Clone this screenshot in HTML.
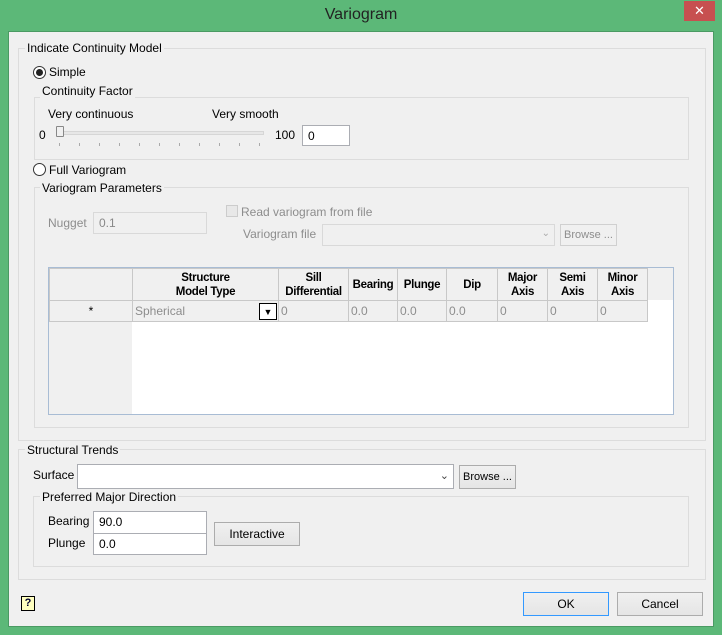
<!DOCTYPE html>
<html><head><style>
*{box-sizing:border-box;margin:0;padding:0}
body{width:722px;height:635px;background:#5cb878;font-family:"Liberation Sans",sans-serif;font-size:12px;color:#000;position:relative;overflow:hidden}
.a{position:absolute}
.client{left:8px;top:31px;width:706px;height:596px;background:#f0f0f0;border:1px solid #4a9a63}
.grp{position:absolute;border:1px solid #dcdcdc}
.lbl{position:absolute;background:#f0f0f0;padding:0 2px;white-space:nowrap}
.inp{position:absolute;background:#fff;border:1px solid #abadb3;padding:3px 5px;white-space:nowrap}
.dis{background:#f0f0f0;border-color:#d9d9d9;color:#888}
.btn{position:absolute;background:linear-gradient(#f0f0f0,#e5e5e5);border:1px solid #acacac;text-align:center;line-height:22px;white-space:nowrap}
.g{color:#8d8d8d}
table{border-collapse:collapse;position:absolute;table-layout:fixed}
td,th{border:1px solid #c8c8c8;font-size:12px;overflow:hidden}
th{font-weight:bold;background:#f0f0f0;line-height:14px;text-align:center;font-size:11.5px;letter-spacing:-0.3px}
td{color:#8d8d8d;background:#f0f0f0;padding:0 2px;height:21px}
</style></head><body>
<div class="a" style="left:0;top:6px;width:722px;text-align:center;font-size:16px;color:#222">Variogram</div>
<div class="a" style="left:684px;top:1px;width:31px;height:20px;background:#c75050;color:#fff;text-align:center;font-size:13px;line-height:20px">✕</div>
<div class="a client"></div>

<div class="grp" style="left:18px;top:48px;width:688px;height:393px"></div>
<div class="lbl" style="left:25px;top:41px">Indicate Continuity Model</div>
<div class="a" style="left:33px;top:66px;width:13px;height:13px;border:1px solid #333;border-radius:50%;background:#fff"><div class="a" style="left:2px;top:2px;width:7px;height:7px;border-radius:50%;background:#222"></div></div>
<div class="a" style="left:49px;top:65px">Simple</div>

<div class="grp" style="left:34px;top:97px;width:655px;height:63px"></div>
<div class="lbl" style="left:40px;top:84px">Continuity Factor</div>
<div class="a" style="left:48px;top:107px">Very continuous</div>
<div class="a" style="left:212px;top:107px">Very smooth</div>
<div class="a" style="left:39px;top:128px">0</div>
<div class="a" style="left:58px;top:131px;width:206px;height:4px;background:#e7e7e7;border:1px solid #d6d6d6"></div>
<div class="a" style="left:56px;top:126px;width:8px;height:11px;background:#f0f0f0;border:1px solid #888;border-radius:1px"></div>
<div class="a" style="left:59px;top:143px;width:202px;height:3px;background:repeating-linear-gradient(90deg,#aaa 0 1px,transparent 1px 20px)"></div>
<div class="a" style="left:275px;top:128px">100</div>
<div class="inp" style="left:302px;top:125px;width:48px;height:21px">0</div>

<div class="a" style="left:33px;top:163px;width:13px;height:13px;border:1px solid #333;border-radius:50%;background:#fff"></div>
<div class="a" style="left:49px;top:163px">Full Variogram</div>
<div class="grp" style="left:34px;top:187px;width:655px;height:241px"></div>
<div class="lbl" style="left:40px;top:181px">Variogram Parameters</div>
<div class="a g" style="left:48px;top:216px">Nugget</div>
<div class="inp dis" style="left:93px;top:212px;width:114px;height:22px">0.1</div>
<div class="a" style="left:226px;top:205px;width:12px;height:12px;border:1px solid #ccc;background:#e8e8e8"></div>
<div class="a g" style="left:241px;top:205px">Read variogram from file</div>
<div class="a g" style="left:243px;top:227px">Variogram file</div>
<div class="inp dis" style="left:322px;top:224px;width:233px;height:22px"><span class="a" style="right:4px;top:3px;font-size:10px;color:#aaa">⌄</span></div>
<div class="btn g" style="left:560px;top:224px;width:57px;height:22px;background:#f0f0f0;border-color:#d0d0d0;font-size:11px;line-height:20px">Browse ...</div>

<div class="a" style="left:48px;top:267px;width:626px;height:148px;background:#fff;border:1px solid #a8bcd4"></div>
<div class="a" style="left:49px;top:268px;width:83px;height:146px;background:#f0f0f0"></div>
<div class="a" style="left:646px;top:268px;width:27px;height:32px;background:#f0f0f0"></div>
<table style="left:49px;top:268px;width:598px">
<colgroup><col style="width:83px"><col style="width:146px"><col style="width:70px"><col style="width:49px"><col style="width:49px"><col style="width:51px"><col style="width:50px"><col style="width:50px"><col style="width:50px"></colgroup>
<tr style="height:32px"><th></th><th>Structure<br>Model Type</th><th>Sill<br>Differential</th><th>Bearing</th><th>Plunge</th><th>Dip</th><th>Major<br>Axis</th><th>Semi<br>Axis</th><th>Minor<br>Axis</th></tr>
<tr><td style="text-align:center;color:#000">*</td><td style="position:relative">Spherical<span class="a" style="right:1px;top:2px;width:18px;height:17px;border:1px solid #000;background:#fff;color:#000;font-size:9px;text-align:center;line-height:16px">▼</span></td><td>0</td><td>0.0</td><td>0.0</td><td>0.0</td><td>0</td><td>0</td><td>0</td></tr>
</table>

<div class="grp" style="left:18px;top:449px;width:688px;height:131px"></div>
<div class="lbl" style="left:25px;top:443px">Structural Trends</div>
<div class="a" style="left:33px;top:468px">Surface</div>
<div class="inp" style="left:77px;top:464px;width:377px;height:25px"><span class="a" style="right:4px;top:4px;font-size:11px;color:#444">⌄</span></div>
<div class="btn" style="left:459px;top:465px;width:57px;height:24px;font-size:11px">Browse ...</div>
<div class="grp" style="left:33px;top:496px;width:656px;height:71px"></div>
<div class="lbl" style="left:40px;top:490px">Preferred Major Direction</div>
<div class="a" style="left:48px;top:514px">Bearing</div>
<div class="inp" style="left:93px;top:511px;width:114px;height:23px">90.0</div>
<div class="a" style="left:48px;top:536px">Plunge</div>
<div class="inp" style="left:93px;top:533px;width:114px;height:22px">0.0</div>
<div class="btn" style="left:214px;top:522px;width:86px;height:24px">Interactive</div>

<div class="a" style="left:21px;top:596px;width:14px;height:15px;border:1px solid #000;background:#ffffc0;font-size:11px;font-weight:bold;text-align:center;line-height:13px;color:#003">?</div>
<div class="btn" style="left:523px;top:592px;width:86px;height:24px;border-color:#3399ff">OK</div>
<div class="btn" style="left:617px;top:592px;width:86px;height:24px">Cancel</div>
</body></html>
